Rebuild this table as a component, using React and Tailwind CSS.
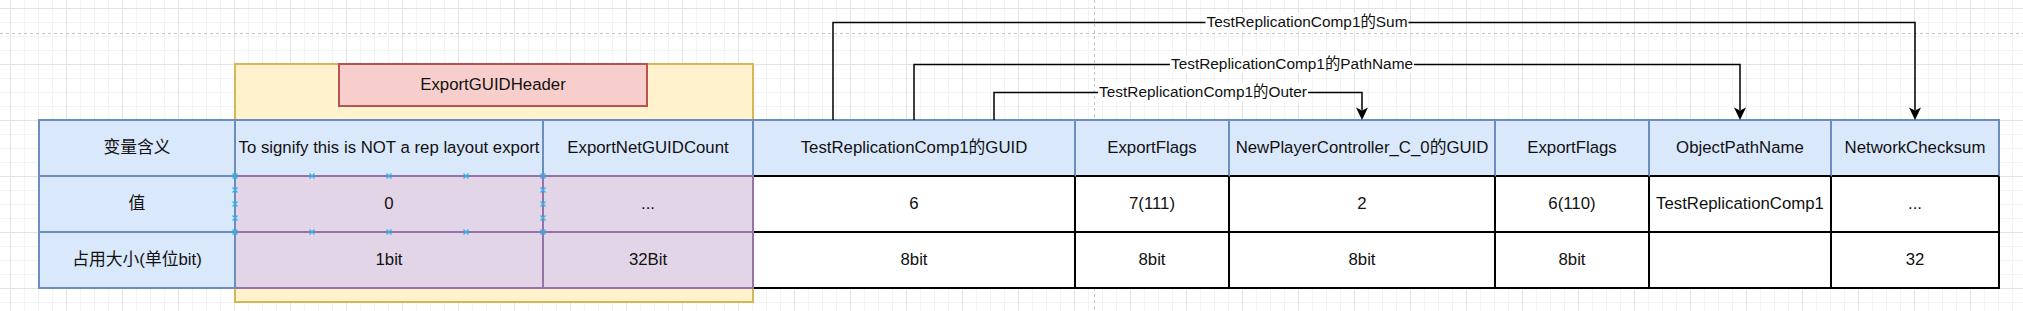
import React from "react";

const COLS = "grid grid-cols-[196px_308px_210px_322px_154px_266px_154px_182px_168px]";

// fill / right border / bottom border, spelled out so tailwind sees them
const HEAD_B = "bg-[#dae8fc] border-r-[#6c8ebf] border-b-[#6c8ebf]";
const HEAD_P = "bg-[#dae8fc] border-r-[#6c8ebf] border-b-[#9673a6]";
const HEAD_K = "bg-[#dae8fc] border-r-[#6c8ebf] border-b-[#000000]";
const BLUE = "bg-[#dae8fc] border-r-[#6c8ebf] border-b-[#6c8ebf]";
const PURP = "bg-[#e1d5e7] border-r-[#9673a6] border-b-[#9673a6]";
const WHITE = "bg-white border-r-[#000000] border-b-[#000000]";

const rows = [
  [
    ["变量含义", HEAD_B],
    ["To signify this is NOT a rep layout export", HEAD_P],
    ["ExportNetGUIDCount", HEAD_P],
    ["TestReplicationComp1的GUID", HEAD_K],
    ["ExportFlags", HEAD_K],
    ["NewPlayerController_C_0的GUID", HEAD_K],
    ["ExportFlags", HEAD_K],
    ["ObjectPathName", HEAD_K],
    ["NetworkChecksum", HEAD_K],
  ],
  [
    ["值", BLUE],
    ["0", PURP],
    ["...", PURP],
    ["6", WHITE],
    ["7(111)", WHITE],
    ["2", WHITE],
    ["6(110)", WHITE],
    ["TestReplicationComp1", WHITE],
    ["...", WHITE],
  ],
  [
    ["占用大小(单位bit)", BLUE],
    ["1bit", PURP],
    ["32Bit", PURP],
    ["8bit", WHITE],
    ["8bit", WHITE],
    ["8bit", WHITE],
    ["8bit", WHITE],
    ["", WHITE],
    ["32", WHITE],
  ],
];

const Cell = ({ text, cls }) => (
  <div className={`h-[56px] flex items-center justify-center border-r-2 border-b-2 whitespace-nowrap text-[16.8px] leading-[20px] text-[#111] ${cls}`}>
    {text}
  </div>
);

const Grid = () => (
  <svg className="absolute inset-0" width="2023" height="311">
    <defs>
      <pattern id="minor" x="10" y="8" width="14" height="14" patternUnits="userSpaceOnUse">
        <rect x="0" y="0" width="1" height="14" fill="#f3f3f3" />
        <rect x="0" y="0" width="14" height="1" fill="#f3f3f3" />
      </pattern>
      <pattern id="major" x="10" y="8" width="56" height="56" patternUnits="userSpaceOnUse">
        <rect x="0" y="0" width="1" height="56" fill="#e3e3e3" />
        <rect x="0" y="0" width="56" height="1" fill="#e3e3e3" />
      </pattern>
    </defs>
    <rect width="2023" height="311" fill="white" />
    <rect width="2023" height="311" fill="url(#minor)" />
    <rect width="2023" height="311" fill="url(#major)" />
    <line x1="0" y1="33.5" x2="2023" y2="33.5" stroke="#c4c4c4" strokeDasharray="3 3" />
    <line x1="1094.5" y1="0" x2="1094.5" y2="311" stroke="#c4c4c4" strokeDasharray="3 3" />
  </svg>
);

const arrow = (x) => `${x},120 ${x - 6},107.5 ${x},110.5 ${x + 6},107.5`;

const Edges = () => {
  const marks = [];
  [235, 312, 389, 466, 543].forEach((x) => {
    marks.push([x, 176]);
    marks.push([x, 232]);
  });
  [190, 204, 218].forEach((y) => {
    marks.push([235, y]);
    marks.push([543, y]);
  });
  return (
    <svg className="absolute inset-0 pointer-events-none" width="2023" height="311">
      <g fill="none" stroke="#000" strokeWidth="1.5">
        <path d="M833 120 V22.5 H1915 V110" />
        <path d="M914 120 V64.5 H1740 V110" />
        <path d="M994 120 V92.5 H1362 V110" />
      </g>
      <g fill="#000">
        <polygon points={arrow(1915)} />
        <polygon points={arrow(1740)} />
        <polygon points={arrow(1362)} />
      </g>
      <g stroke="#29b6f2" strokeWidth="1.2">
        {marks.map(([x, y], i) => (
          <path key={i} d={`M${x - 2.5} ${y - 2.5} L${x + 2.5} ${y + 2.5} M${x + 2.5} ${y - 2.5} L${x - 2.5} ${y + 2.5}`} />
        ))}
      </g>
    </svg>
  );
};

const Label = ({ children, pos }) => (
  <span className={`absolute -translate-x-1/2 -translate-y-1/2 bg-white px-[1px] text-[15.4px] leading-[18px] text-[#111] whitespace-nowrap ${pos}`}>
    {children}
  </span>
);

export default function App() {
  return (
    <div className="relative w-[2023px] h-[311px] overflow-hidden bg-white font-['Liberation_Sans','Noto_Sans_CJK_SC',sans-serif]">
      <Grid />

      {/* ExportGUIDHeader group */}
      <div className="absolute left-[234px] top-[63px] w-[520px] h-[240px] border-2 border-[#d6b656] bg-[#fff2cc]" />
      <div className="absolute left-[338px] top-[63px] w-[310px] h-[44px] border-2 border-[#b85450] bg-[#f8cecc] flex items-center justify-center text-[16.8px] text-[#111]">
        ExportGUIDHeader
      </div>

      <div className="relative pt-[119px] pl-[38px]">
        <div className={`${COLS} w-max border-t-2 border-l-2 border-[#6c8ebf]`}>
          {rows.map((row, ri) =>
            row.map(([text, cls], ci) => <Cell key={`${ri}-${ci}`} text={text} cls={cls} />)
          )}
        </div>
      </div>

      <Edges />
      <Label pos="left-[1307px] top-[22px]">TestReplicationComp1的Sum</Label>
      <Label pos="left-[1292px] top-[64px]">TestReplicationComp1的PathName</Label>
      <Label pos="left-[1203px] top-[92px]">TestReplicationComp1的Outer</Label>
    </div>
  );
}
